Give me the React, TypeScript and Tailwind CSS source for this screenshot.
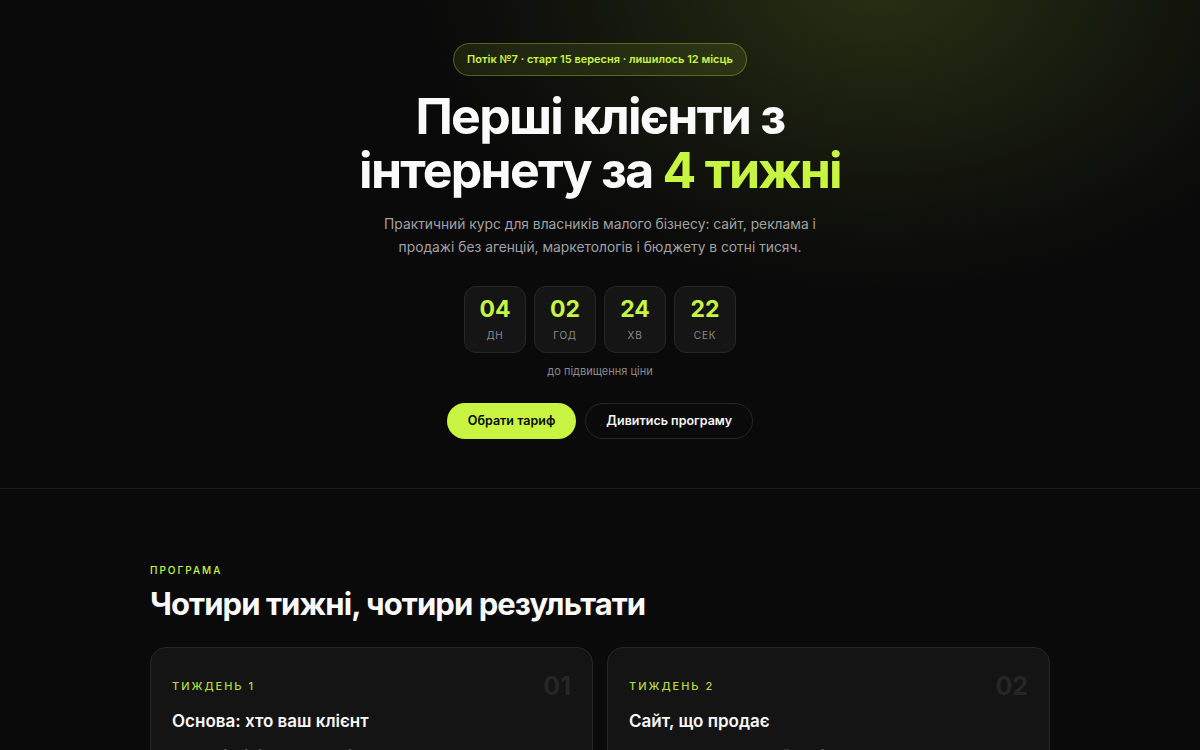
import React from "react";

const time = [
  { v: "04", l: "ДН" },
  { v: "02", l: "ГОД" },
  { v: "24", l: "ХВ" },
  { v: "22", l: "СЕК" },
];

const weeks = [
  {
    n: "01",
    label: "Тиждень 1",
    title: "Основа: хто ваш клієнт",
    items: ["Аналіз ніші та конкурентів", "Портрет ідеального клієнта"],
  },
  {
    n: "02",
    label: "Тиждень 2",
    title: "Сайт, що продає",
    items: ["Структура продаючої сторінки", "Запуск без програміста"],
  },
];

export default function App() {
  return (
    <div
      className="min-h-screen bg-[#0a0a0a] text-white"
      style={{ fontFamily: "Inter, 'Noto Sans', sans-serif" }}
    >
      <section className="flex flex-col items-center border-b border-[#1c1c1c] bg-[radial-gradient(ellipse_560px_380px_at_880px_-20px,rgba(200,245,66,0.16),rgba(200,245,66,0.045)_55%,transparent_82%)] pt-[43px] pb-[49px]">
        <div className="rounded-full border border-[#c8f542]/30 bg-[#c8f542]/10 px-[13px] py-[7px] text-[11px] font-semibold text-[#c8f542]">
          Потік №7 · старт 15 вересня · лишилось 12 місць
        </div>

        <h1 className="mt-[13px] text-center text-[50px] font-bold leading-[54px] tracking-[-0.035em] text-[#fafafa]">
          Перші клієнти з
          <br />
          інтернету за <span className="text-[#c8f542]">4 тижні</span>
        </h1>

        <p className="mt-[16px] max-w-[440px] text-center text-[13.8px] leading-[23px] text-[#a1a1a1]">
          Практичний курс для власників малого бізнесу: сайт, реклама і
          продажі без агенцій, маркетологів і бюджету в сотні тисяч.
        </p>

        <div className="mt-[27px] flex gap-2">
          {time.map((t) => (
            <div
              key={t.l}
              className="flex h-[67px] w-[62px] flex-col items-center justify-center rounded-xl border border-[#262626] bg-[#151515]"
            >
              <span className="text-[23px] font-bold leading-none text-[#c8f542]">
                {t.v}
              </span>
              <span className="mt-[9px] text-[10px] leading-none tracking-[0.08em] text-[#8a8a8a]">
                {t.l}
              </span>
            </div>
          ))}
        </div>

        <p className="mt-[10px] text-[11px] text-[#8a8a8a]">до підвищення ціни</p>

        <div className="mt-[24px] flex gap-[9px]">
          <button className="h-[36px] rounded-full bg-[#c8f542] px-[21px] text-[12.5px] font-semibold text-[#0a0a0a]">
            Обрати тариф
          </button>
          <button className="h-[36px] rounded-full border border-[#262626] px-[20px] text-[12.5px] font-semibold text-[#f5f5f5]">
            Дивитись програму
          </button>
        </div>
      </section>

      <section className="mx-auto w-[900px] pt-[74px] pb-16">
        <p className="text-[10px] font-medium uppercase tracking-[0.2em] text-[#c8f542]">
          Програма
        </p>
        <h2 className="mt-[3px] text-[31px] font-bold tracking-[-0.03em] text-[#fafafa]">
          Чотири тижні, чотири результати
        </h2>

        <div className="mt-[19px] grid grid-cols-2 gap-[14px]">
          {weeks.map((w) => (
            <div
              key={w.n}
              className="rounded-2xl border border-[#262626] bg-[#141415] px-[21px] pt-[26px] pb-6"
            >
              <div className="flex items-center justify-between">
                <span className="text-[11px] font-medium uppercase tracking-[0.18em] text-[#b5dc3c]">
                  {w.label}
                </span>
                <span className="text-[25px] font-bold leading-none text-[#262627]">
                  {w.n}
                </span>
              </div>
              <h3 className="mt-[10px] text-[17px] font-semibold text-[#fafafa]">
                {w.title}
              </h3>
              <ul className="mt-[12px] space-y-2 text-[13px] text-[#a1a1a1]">
                {w.items.map((i) => (
                  <li key={i} className="flex gap-2">
                    <span className="text-[#c8f542]">→</span>
                    {i}
                  </li>
                ))}
              </ul>
            </div>
          ))}
        </div>
      </section>
    </div>
  );
}
